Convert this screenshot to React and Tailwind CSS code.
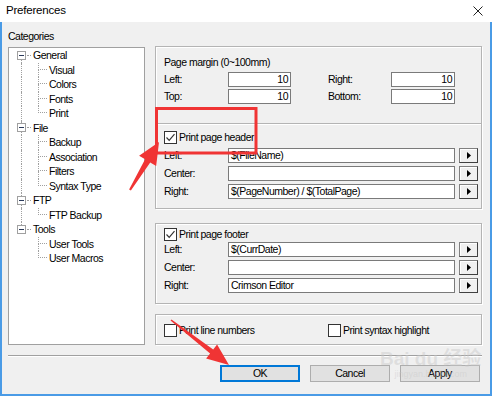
import React from "react";

const tree = [
  { label: "General", children: ["Visual", "Colors", "Fonts", "Print"] },
  { label: "File", children: ["Backup", "Association", "Filters", "Syntax Type"] },
  { label: "FTP", children: ["FTP Backup"] },
  { label: "Tools", children: ["User Tools", "User Macros"] },
];

function MinusBox() {
  return (
    <div className="flex h-[9px] w-[9px] shrink-0 items-center justify-center border border-[#a0a0a0] bg-white">
      <div className="h-px w-[5px] bg-[#2b3a5a]" />
    </div>
  );
}

function Tree() {
  const rows = [];
  tree.forEach((node, i) => {
    const first = i === 0;
    const last = i === tree.length - 1;
    rows.push(
      <div key={node.label} className="flex h-[14.5px] items-stretch">
        <div className="ml-[8px] flex w-[9px] flex-col items-center">
          <div className={first ? "w-0 flex-1" : "w-0 flex-1 border-l border-dotted border-[#a0a0a0]"} />
          <MinusBox />
          <div className={last ? "w-0 flex-1" : "w-0 flex-1 border-l border-dotted border-[#a0a0a0]"} />
        </div>
        <div className="ml-[1px] w-[4px] self-center border-t border-dotted border-[#a0a0a0]" />
        <span className="ml-[2px] leading-[14.5px]">{node.label}</span>
      </div>
    );
    node.children.forEach((c, j) => {
      const lastChild = j === node.children.length - 1;
      rows.push(
        <div key={c} className="flex h-[14.5px] items-stretch">
          <div className="ml-[8px] flex w-[9px] justify-center">
            {!last && <div className="w-0 border-l border-dotted border-[#a0a0a0]" />}
          </div>
          <div className="ml-[12px] flex w-[9px] flex-col">
            <div className="h-1/2 border-b border-l border-dotted border-[#a0a0a0]" />
            <div className={lastChild ? "flex-1" : "flex-1 border-l border-dotted border-[#a0a0a0]"} />
          </div>
          <span className="ml-[2px] leading-[14.5px]">{c}</span>
        </div>
      );
    });
  });
  return <div className="flex flex-col">{rows}</div>;
}

function NumField({ className }) {
  return (
    <div
      className={
        "h-[15px] border border-[#7a7a7a] bg-white pr-[2px] text-right leading-[13px] " + className
      }
    >
      10
    </div>
  );
}

function TextRow({ label, value }) {
  return (
    <div className="flex h-[15px] items-center">
      <span className="w-[64px] leading-[15px]">{label}</span>
      <div className="h-[15px] w-[227px] border border-[#7a7a7a] bg-white pl-[2px] leading-[13px] whitespace-nowrap">
        {value}
      </div>
      <div className="ml-[4px] flex h-[15px] w-[19px] items-center justify-center border border-[#808080] border-r-[#404040] border-b-[#404040] bg-[#f0f0f0] shadow-[inset_1px_1px_0_#fff]">
        <svg width="4" height="7" viewBox="0 0 4 7">
          <path d="M0 0 L4 3.5 L0 7 Z" fill="#000" />
        </svg>
      </div>
    </div>
  );
}

function Check({ checked }) {
  return (
    <div className="flex h-[13px] w-[13px] shrink-0 items-center justify-center border border-[#333] bg-white">
      {checked && (
        <svg width="11" height="11" viewBox="0 0 11 11">
          <path d="M1.5 5.5 L4.2 8.3 L9.5 2.2" fill="none" stroke="#333" strokeWidth="1.2" />
        </svg>
      )}
    </div>
  );
}

function arrowPoints(x1, y1, x2, y2, headLen, headW, w0, w1) {
  const dx = x2 - x1;
  const dy = y2 - y1;
  const L = Math.hypot(dx, dy);
  const ux = dx / L;
  const uy = dy / L;
  const nx = -uy;
  const ny = ux;
  const neckX = x2 - ux * headLen;
  const neckY = y2 - uy * headLen;
  const p = [
    [x1 + (nx * w0) / 2, y1 + (ny * w0) / 2],
    [neckX + (nx * w1) / 2, neckY + (ny * w1) / 2],
    [neckX + (nx * headW) / 2, neckY + (ny * headW) / 2],
    [x2, y2],
    [neckX - (nx * headW) / 2, neckY - (ny * headW) / 2],
    [neckX - (nx * w1) / 2, neckY - (ny * w1) / 2],
    [x1 - (nx * w0) / 2, y1 - (ny * w0) / 2],
  ];
  return p.map((q) => q[0].toFixed(1) + "," + q[1].toFixed(1)).join(" ");
}

const BORDER = "border border-[#b4b4b4] shadow-[1px_1px_0_#fff,inset_1px_1px_0_#fff]";

export default function App() {
  return (
    <div className="relative h-[398px] w-[492px] overflow-hidden bg-white font-['Liberation_Sans',Arial,sans-serif] text-[10.5px] tracking-[-0.5px] text-black">
      {/* Title bar */}
      <div className="flex h-[22px] items-center bg-white">
        <span className="ml-[6px] text-[11.5px] tracking-[-0.2px]">Preferences</span>
        <div className="ml-auto mr-[9px]">
          <svg width="10" height="10" viewBox="0 0 10 10">
            <path d="M0.5 0.5 L9.5 9.5 M9.5 0.5 L0.5 9.5" stroke="#222" strokeWidth="1" />
          </svg>
        </div>
      </div>

      {/* Body */}
      <div className="flex h-[374px] flex-col border-x-2 border-b-2 border-[#4a9be6] bg-[#f0f0f0]">
        <div className="flex items-start">
          {/* Left column */}
          <div className="ml-[6px] flex w-[137px] flex-col pt-[8px]">
            <div className="h-[13px] leading-[13px]">Categories</div>
            <div className="mt-[4px] h-[298px] border border-[#a0a0a0] bg-white">
              <Tree />
            </div>
          </div>

          {/* Right column */}
          <div className="ml-[10px] mt-[24px] flex w-[327px] flex-col">
            {/* Page margin */}
            <div className={"h-[78px] pl-[8px] pt-[9px] " + BORDER}>
              <div className="h-[12px] leading-[12px]">Page margin (0~100mm)</div>
              <div className="mt-[4px] flex h-[15px] items-center">
                <span className="w-[64px]">Left:</span>
                <NumField className="w-[63px]" />
                <span className="ml-[37px] w-[63px]">Right:</span>
                <NumField className="w-[64px]" />
              </div>
              <div className="mt-[2px] flex h-[15px] items-center">
                <span className="w-[64px]">Top:</span>
                <NumField className="w-[63px]" />
                <span className="ml-[37px] w-[63px]">Bottom:</span>
                <NumField className="w-[64px]" />
              </div>
            </div>

            {/* Header */}
            <div className="h-[85px] border border-t-0 border-[#b4b4b4] pl-[8px] pt-[7px] shadow-[1px_1px_0_#fff,inset_1px_0_0_#fff]">
              <div className="flex h-[13px] items-center">
                <Check checked />
                <span className="ml-[2px]">Print page header</span>
              </div>
              <div className="mt-[4px] flex flex-col gap-[3px]">
                <TextRow label="Left:" value="$(FileName)" />
                <TextRow label="Center:" value="" />
                <TextRow label="Right:" value="$(PageNumber) / $(TotalPage)" />
              </div>
            </div>

            {/* Footer */}
            <div className={"mt-[14px] h-[81px] pl-[8px] pt-[4px] " + BORDER}>
              <div className="flex h-[13px] items-center">
                <Check checked />
                <span className="ml-[2px]">Print page footer</span>
              </div>
              <div className="mt-[1px] flex flex-col gap-[3px]">
                <TextRow label="Left:" value="$(CurrDate)" />
                <TextRow label="Center:" value="" />
                <TextRow label="Right:" value="Crimson Editor" />
              </div>
            </div>

            {/* Options */}
            <div className={"mt-[10px] h-[31px] pl-[8px] pt-[9px] " + BORDER}>
              <div className="flex h-[13px] items-center">
                <div className="flex w-[164px] items-center">
                  <Check />
                  <span className="ml-[2px]">Print line numbers</span>
                </div>
                <div className="flex items-center">
                  <Check />
                  <span className="ml-[2px]">Print syntax highlight</span>
                </div>
              </div>
            </div>
          </div>
        </div>

        {/* Separator */}
        <div className="ml-[6px] mt-[10px] h-[2px] w-[474px] border-t border-b border-t-[#a0a0a0] border-b-white" />

        {/* Buttons */}
        <div className="ml-[218px] mt-[8px] flex gap-[10px]">
          <div className="flex h-[17px] w-[80px] items-center justify-center border border-[#0078d7] bg-[#e1e1e1] shadow-[inset_0_0_0_1px_#0078d7]">
            OK
          </div>
          <div className="flex h-[17px] w-[80px] items-center justify-center border border-[#adadad] bg-[#e1e1e1]">
            Cancel
          </div>
          <div className="flex h-[17px] w-[80px] items-center justify-center border border-[#adadad] bg-[#e1e1e1]">
            Apply
          </div>
        </div>
      </div>

      {/* Watermark */}
      <div className="pointer-events-none absolute left-[380px] top-[348px] flex flex-col items-center text-[rgba(200,200,200,0.45)] tracking-normal">
        <div className="font-['Liberation_Sans','Noto_Sans_CJK_SC',sans-serif] text-[19px] font-bold leading-[21px]">
          Bai du 经验
        </div>
        <div className="font-['Liberation_Sans',sans-serif] text-[9px] leading-[10px]">jingyan.baidu.com</div>
      </div>

      {/* Red annotations */}
      <svg className="pointer-events-none absolute left-0 top-0" width="492" height="398" viewBox="0 0 492 398">
        <rect x="156.5" y="108.5" width="99.5" height="44.5" fill="none" stroke="#f03434" strokeWidth="3" />
        <polygon points={arrowPoints(130, 190, 159, 142, 22, 20, 2, 6)} fill="#f03434" />
        <polygon points={arrowPoints(171, 320, 229, 365, 22, 18, 1.5, 5)} fill="#f03434" />
      </svg>
    </div>
  );
}
